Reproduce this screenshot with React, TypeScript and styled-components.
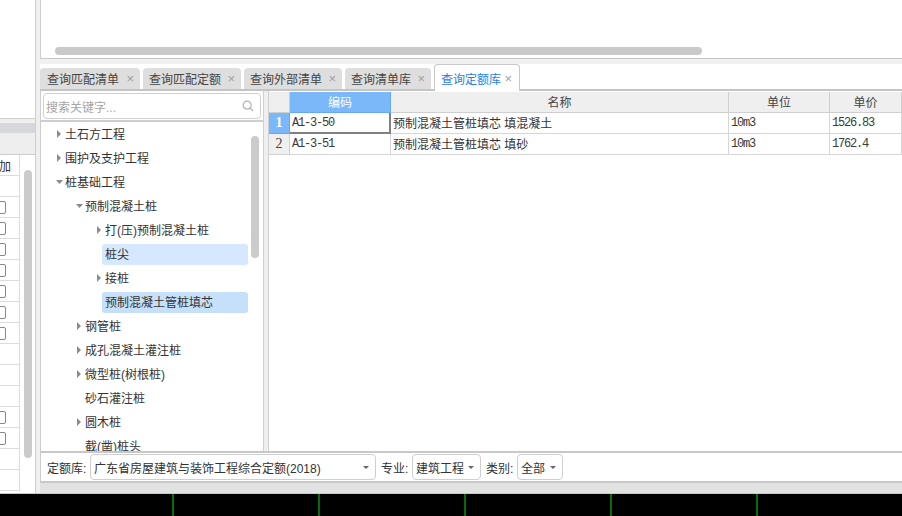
import React from "react";
import styled, { createGlobalStyle } from "styled-components";

const Global = createGlobalStyle`
  html, body { margin: 0; padding: 0; background: #fff; overflow: hidden; }
  #root { width: 902px; height: 516px; overflow: hidden; }
  * { box-sizing: border-box; }
  body { font-family: "Liberation Sans", "Noto Sans CJK SC", sans-serif; font-size: 12px; color: #333; }
`;

const Page = styled.div`
  width: 902px; height: 516px; display: flex; flex-direction: column; background: #000;
`;
const Workspace = styled.div`
  height: 494px; display: flex; background: #efefef; border-bottom: 1px solid #c8c8c8;
`;

/* left, clipped panel */
const LeftPanel = styled.div`
  position: relative; width: 36px; height: 493px; flex: none; overflow: hidden;
  border-right: 1px solid #cdcdcd; display: flex; flex-direction: column; background: #fff;
`;
const LeftTop = styled.div`
  height: 119px; flex: none; background: #fff; border-bottom: 1px solid #cdcdcd;
`;
const LeftGap = styled.div`height: 4px; flex: none; background: #f0f0f0;`;
const LeftBar = styled.div`height: 10px; flex: none; background: #d6d8dc;`;
const LeftTools = styled.div`
  height: 22px; flex: none; background: #eeeeee; border-bottom: 1px solid #cdcdcd;
`;
const LeftRow = styled.div<{ $pad?: number }>`
  height: 21px; flex: none; width: 20px; display: flex; align-items: center;
  justify-content: flex-end; padding-right: ${(p) => p.$pad ?? 13}px; border-bottom: 1px solid #dcdcdc;
  border-right: 1px solid #dcdcdc; font-size: 12px; color: #333; white-space: nowrap;
`;
const Check = styled.span`
  flex: none; width: 14px; height: 13px; border: 1px solid #888; border-radius: 2px; background: #fff;
`;
const LeftScroll = styled.div`
  position: absolute; left: 24px; top: 170px; width: 8px; height: 288px; border-radius: 4px; background: #cbcbcb;
`;

const Gutter = styled.div`width: 4px; flex: none; background: #efefef;`;

const RightColumn = styled.div`
  flex: 1; min-width: 0; display: flex; flex-direction: column;
`;
const TopPane = styled.div`
  position: relative; height: 59px; flex: none; background: #fff;
  border-left: 1px solid #cdcdcd; border-bottom: 1px solid #c8c8c8;
`;
const TopScroll = styled.div`
  position: absolute; left: 14px; top: 47px; width: 647px; height: 8px; border-radius: 4px; background: #c9c9c9;
`;
const Strip = styled.div`height: 5px; flex: none; background: #f1f1f1;`;

const TabBar = styled.div`
  height: 27px; flex: none; display: flex; align-items: flex-end; gap: 3px; background: #fff;
  border-bottom: 2px solid #c4c4c6;
`;
const Tab = styled.div<{ $w: number; $active?: boolean; $first?: boolean }>`
  width: ${(p) => p.$w}px; height: ${(p) => (p.$active ? 27 : 21)}px; flex: none; display: flex; align-items: center;
  justify-content: space-between; padding: 0 ${(p) => (p.$active ? 7 : 6)}px 0 ${(p) => (p.$first ? 7 : 6)}px;
  margin: ${(p) => (p.$active ? "0 0 -2px" : "0")};
  background: ${(p) => (p.$active ? "#fff" : "#dedede")};
  color: ${(p) => (p.$active ? "#1f7fe6" : "#444")};
  border-radius: 4px 4px 0 0;
  border: ${(p) => (p.$active ? "1px solid #c8c8c8" : "none")};
  border-bottom: none;
  font-size: 12px; white-space: nowrap;
`;
const TabClose = styled.span`
  font-family: "Liberation Sans", sans-serif; font-size: 13px; color: #a0a0a0; line-height: 1;
`;

const Body = styled.div`
  height: 360px; flex: none; display: flex; background: #fff; border-left: 1px solid #cdcdcd;
`;
const TreePane = styled.div`
  position: relative; width: 222px; flex: none; display: flex; flex-direction: column; overflow: hidden;
`;
const SearchWrap = styled.div`
  height: 31px; flex: none; padding: 2px 2px 1px 2px; border-bottom: 2px solid #cdcdcf;
`;
const Search = styled.div`
  height: 26px; border: 1px solid #d0d0d0; border-radius: 4px; display: flex; align-items: center;
  justify-content: space-between; padding: 0 6px 0 2px; color: #a6a6a6; font-size: 12px;
`;
const TreeList = styled.div`
  flex: 1; min-height: 0; overflow: hidden; display: flex; flex-direction: column;
`;
const TreeRow = styled.div<{ $level: number }>`
  height: 24px; flex: none; display: flex; align-items: center; white-space: nowrap;
  padding-left: ${(p) => 15 + p.$level * 20}px; color: #333; font-size: 12px;
`;
const Arrow = styled.span<{ $down?: boolean }>`
  width: 9px; flex: none; display: flex; align-items: center; justify-content: flex-start;
  padding-left: ${(p) => (p.$down ? 0 : 1)}px;
`;
const NodeLabel = styled.span<{ $bg?: string }>`
  display: flex; align-items: center; height: 21px; padding-bottom: 2px; border-radius: 3px;
  margin-left: ${(p) => (p.$bg ? -3 : 0)}px;
  padding-left: ${(p) => (p.$bg ? 3 : 0)}px; width: ${(p) => (p.$bg ? "146px" : "auto")};
  background: ${(p) => p.$bg ?? "transparent"};
`;
const TreeScroll = styled.div`
  position: absolute; left: 210px; top: 45px; width: 8px; height: 122px; border-radius: 4px; background: #cbcbcb;
`;
const Splitter = styled.div`
  width: 6px; flex: none; background: #efefef; border-left: 1px solid #d0d0d0; border-right: 1px solid #d0d0d0;
`;

const Grid = styled.div`flex: 1; min-width: 0; padding-top: 1px; overflow: hidden;`;
const GridRow = styled.div`
  display: grid; grid-template-columns: 21px 101px 338px 101px 1fr; height: 21px;
`;
const HeadCell = styled.div<{ $selected?: boolean }>`
  display: flex; align-items: center; justify-content: center; font-size: 12px; padding-bottom: 1px;
  background: ${(p) => (p.$selected ? "#7ab8fa" : "#efefef")};
  color: ${(p) => (p.$selected ? "#fff" : "#444")};
  border-right: 1px solid ${(p) => (p.$selected ? "#64a9f2" : "#cfcfcf")};
  border-bottom: 1px solid ${(p) => (p.$selected ? "#64a9f2" : "#cfcfcf")};
`;
const RowHead = styled(HeadCell)`
  font-family: "Liberation Serif", serif; font-size: 14px; font-weight: ${(p) => (p.$selected ? 700 : 400)};
`;
const Cell = styled.div<{ $active?: boolean }>`
  display: flex; align-items: center; padding: 0 0 2px 2px; background: #fff; white-space: nowrap; overflow: hidden;
  font-size: 12px; color: #333;
  border-right: ${(p) => (p.$active ? "2px solid #808080" : "1px solid #d6d6d6")};
  border-bottom: ${(p) => (p.$active ? "2px solid #808080" : "1px solid #d6d6d6")};
`;
const MonoCell = styled(Cell)`
  font-family: "Liberation Mono", monospace; letter-spacing: -1.2px; font-size: 12px; color: #3a3a3a; padding-bottom: 0;
`;

const Footer = styled.div`
  height: 32px; flex: none; display: flex; align-items: center; background: #fff;
  border-left: 1px solid #cdcdcd; border-top: 2px solid #c8c8ca; border-bottom: 2px solid #c8c8ca; padding-left: 6px;
`;
const FootLabel = styled.span<{ $w: number }>`
  width: ${(p) => p.$w}px; flex: none; color: #333; font-size: 12px; white-space: nowrap;
`;
const Select = styled.div<{ $w: number }>`
  width: ${(p) => p.$w}px; height: 26px; flex: none; display: flex; align-items: center; justify-content: space-between;
  border: 1px solid #cfcfcf; border-radius: 4px; padding: 0 6px 0 3px; margin-right: 5px; font-size: 12px; color: #333; white-space: nowrap;
`;
const Caret = styled.span`
  width: 0; height: 0; border-left: 3px solid transparent; border-right: 3px solid transparent; border-top: 3px solid #666;
`;
const BottomStrip = styled.div`flex: 1; background: #e2e2e2;`;

const BlackBar = styled.div`
  flex: 1; background: #000; display: flex; gap: 144px; padding-left: 172px;
`;
const Tick = styled.span`width: 2px; background: #0a6a0a; flex: none;`;

const TriRight = () => (
  <svg width="4" height="8" viewBox="0 0 4 8"><path d="M0 0L4 4L0 8Z" fill="#8c8c8c" /></svg>
);
const TriDown = () => (
  <svg width="7" height="4" viewBox="0 0 7 4"><path d="M0 0H7L3.5 4Z" fill="#8c8c8c" /></svg>
);

type Node = { t: string; l: number; a?: "r" | "d"; bg?: string };
const nodes: Node[] = [
  { t: "土石方工程", l: 0, a: "r" },
  { t: "围护及支护工程", l: 0, a: "r" },
  { t: "桩基础工程", l: 0, a: "d" },
  { t: "预制混凝土桩", l: 1, a: "d" },
  { t: "打(压)预制混凝土桩", l: 2, a: "r" },
  { t: "桩尖", l: 2, bg: "#d6e8fd" },
  { t: "接桩", l: 2, a: "r" },
  { t: "预制混凝土管桩填芯", l: 2, bg: "#c6dffa" },
  { t: "钢管桩", l: 1, a: "r" },
  { t: "成孔混凝土灌注桩", l: 1, a: "r" },
  { t: "微型桩(树根桩)", l: 1, a: "r" },
  { t: "砂石灌注桩", l: 1 },
  { t: "圆木桩", l: 1, a: "r" },
  { t: "截(凿)桩头", l: 1 },
];

const tabs = [
  { t: "查询匹配清单", w: 100 },
  { t: "查询匹配定额", w: 98 },
  { t: "查询外部清单", w: 98 },
  { t: "查询清单库", w: 86 },
];

const leftRows = [false, true, true, true, true, true, true, true, false, false, false, true, true, false, false];

export default function App() {
  return (
    <Page>
      <Global />
      <Workspace>
        <LeftPanel>
          <LeftTop />
          <LeftGap />
          <LeftBar />
          <LeftTools />
          <LeftRow $pad={8}>加</LeftRow>
          {leftRows.map((c, i) => (
            <LeftRow key={i}>{c && <Check />}</LeftRow>
          ))}
          <LeftScroll />
        </LeftPanel>
        <Gutter />
        <RightColumn>
          <TopPane>
            <TopScroll />
          </TopPane>
          <Strip />
          <TabBar>
            {tabs.map((x, i) => (
              <Tab key={x.t} $w={x.w} $first={i === 0}>
                {x.t}
                <TabClose>×</TabClose>
              </Tab>
            ))}
            <Tab $w={86} $active>
              查询定额库
              <TabClose>×</TabClose>
            </Tab>
          </TabBar>
          <Body>
            <TreePane>
              <SearchWrap>
                <Search>
                  搜索关键字...
                  <svg width="12" height="12" viewBox="0 0 12 12" fill="none" stroke="#b0b0b0" strokeWidth="1.2">
                    <circle cx="5.2" cy="5.2" r="4" />
                    <path d="M8.2 8.2L11 11" />
                  </svg>
                </Search>
              </SearchWrap>
              <TreeList>
                {nodes.map((n) => (
                  <TreeRow key={n.t} $level={n.l}>
                    <Arrow $down={n.a === "d"}>{n.a === "r" ? <TriRight /> : n.a === "d" ? <TriDown /> : null}</Arrow>
                    <NodeLabel $bg={n.bg}>{n.t}</NodeLabel>
                  </TreeRow>
                ))}
              </TreeList>
              <TreeScroll />
            </TreePane>
            <Splitter />
            <Grid>
              <GridRow>
                <HeadCell />
                <HeadCell $selected>编码</HeadCell>
                <HeadCell>名称</HeadCell>
                <HeadCell>单位</HeadCell>
                <HeadCell>单价</HeadCell>
              </GridRow>
              <GridRow>
                <RowHead $selected>1</RowHead>
                <MonoCell $active>A1-3-50</MonoCell>
                <Cell>预制混凝土管桩填芯 填混凝土</Cell>
                <MonoCell>10m3</MonoCell>
                <MonoCell>1526.83</MonoCell>
              </GridRow>
              <GridRow>
                <RowHead>2</RowHead>
                <MonoCell>A1-3-51</MonoCell>
                <Cell>预制混凝土管桩填芯 填砂</Cell>
                <MonoCell>10m3</MonoCell>
                <MonoCell>1762.4</MonoCell>
              </GridRow>
            </Grid>
          </Body>
          <Footer>
            <FootLabel $w={43}>定额库:</FootLabel>
            <Select $w={286}>
              广东省房屋建筑与装饰工程综合定额(2018)
              <Caret />
            </Select>
            <FootLabel $w={31}>专业:</FootLabel>
            <Select $w={69}>
              建筑工程
              <Caret />
            </Select>
            <FootLabel $w={31}>类别:</FootLabel>
            <Select $w={46}>
              全部
              <Caret />
            </Select>
          </Footer>
          <BottomStrip />
        </RightColumn>
      </Workspace>
      <BlackBar>
        {[0, 1, 2, 3, 4].map((i) => (
          <Tick key={i} />
        ))}
      </BlackBar>
    </Page>
  );
}
